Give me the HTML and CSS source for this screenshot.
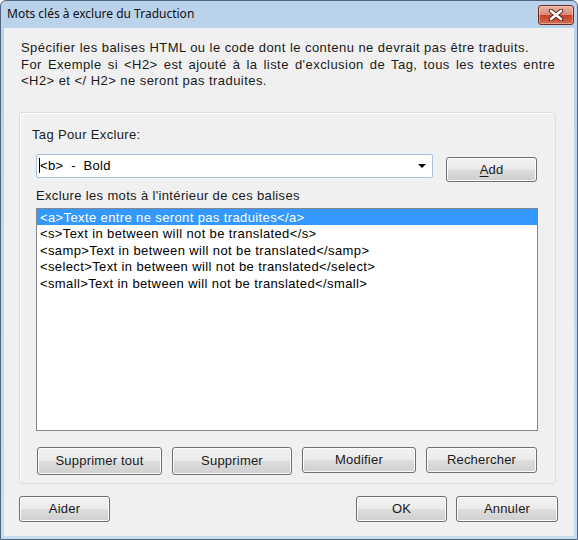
FILE: index.html
```html
<!DOCTYPE html>
<html lang="fr">
<head>
    <meta charset="UTF-8">
    <title>Mots clés à exclure du Traduction</title>
    <link rel="stylesheet" href="styles.css">
</head>
<body>

<div class="window">
    <div class="titlebar">
        <span class="title">Mots clés à exclure du Traduction</span>
        <span class="close">
            <svg width="16" height="12" viewBox="0 0 16 12">
                <path d="M3 2 L13 10 M13 2 L3 10" stroke="#5a2218" stroke-width="4.5" stroke-linecap="round"/>
                <path d="M3 2 L13 10 M13 2 L3 10" stroke="#fff" stroke-width="2.6" stroke-linecap="round"/>
            </svg>
        </span>
    </div>

    <div class="client">
        <p class="intro">Spécifier les balises HTML ou le code dont le contenu ne devrait pas être traduits.<br>
<span class="wide">For Exemple si &lt;H2&gt; est ajouté à la liste d'exclusion de Tag, tous les textes entre</span><br>
&lt;H2&gt; et &lt;/ H2&gt; ne seront pas traduites.</p>

        <div class="group">
            <div class="label tag-label">Tag Pour Exclure:</div>
            <div class="tag-row">
                <div class="combo">
                    <span class="combo-text">&lt;b&gt;  -  Bold</span>
                    <span class="arrow"></span>
                </div>
                <button class="btn btn-add"><u>A</u>dd</button>
            </div>

            <div class="label list-label">Exclure les mots à l'intérieur de ces balises</div>
            <ul class="listbox">
                <li class="selected">&lt;a&gt;Texte entre ne seront pas traduites&lt;/a&gt;</li>
                <li>&lt;s&gt;Text in between will not be translated&lt;/s&gt;</li>
                <li>&lt;samp&gt;Text in between will not be translated&lt;/samp&gt;</li>
                <li>&lt;select&gt;Text in between will not be translated&lt;/select&gt;</li>
                <li>&lt;small&gt;Text in between will not be translated&lt;/small&gt;</li>
            </ul>

            <div class="list-actions">
                <button class="btn btn-clear">Supprimer tout</button>
                <button class="btn btn-delete">Supprimer</button>
                <button class="btn btn-edit">Modifier</button>
                <button class="btn btn-find">Rechercher</button>
            </div>
        </div>

        <div class="footer">
            <button class="btn btn-help">Aider</button>
            <div class="footer-right">
                <button class="btn btn-ok">OK</button>
                <button class="btn btn-cancel">Annuler</button>
            </div>
        </div>
    </div>
</div>

</body>
</html>
```

FILE: styles.css
```css
html, body {
    margin: 0;
    padding: 0;
}
body {
    width: 578px;
    height: 540px;
    font-family: "Liberation Sans", Arial, sans-serif;
    font-size: 13px;
    color: #000;
}
.window {
    box-sizing: border-box;
    width: 578px;
    height: 540px;
    border: 1px solid #4f6580;
    border-radius: 6px 6px 0 0;
    background: linear-gradient(#bad2ea, #c6dcf1);
    display: flex;
    flex-direction: column;
}
.titlebar {
    height: 27px;
    display: flex;
    align-items: center;
    justify-content: space-between;
    padding-left: 6px;
    flex-shrink: 0;
}
.title {
    font-family: "Noto Sans", sans-serif;
    font-size: 12px;
    color: #111;
    margin-top: -2px;
}
.close {
    box-sizing: border-box;
    width: 36px;
    height: 20px;
    margin-right: 3px;
    align-self: flex-start;
    margin-top: 4px;
    border: 1px solid #6b2a22;
    border-radius: 3px;
    background: linear-gradient(#eab0a3 0%, #dc8a78 48%, #c3402a 52%, #d66a52 100%);
    box-shadow: inset 0 0 0 1px rgba(255, 220, 210, 0.5);
    display: flex;
    align-items: center;
    justify-content: center;
}
.client {
    flex: 1;
    margin: 0 3px 3px 3px;
    background: #f0f0f0;
    padding: 12px 18px 0 15px;
}
.intro {
    margin: 0 0 0 2px;
    line-height: 16.5px;
    letter-spacing: 0.45px;
    color: #1a1a1a;
    white-space: nowrap;
}
.intro .wide {
    word-spacing: 2px;
}
.group {
    margin-top: 22px;
    height: 372px;
    box-sizing: border-box;
    border: 1px solid #d5dfe5;
    border-radius: 3px;
    box-shadow: inset 1px 1px 0 #fff;
    padding: 14px 18px 0 16px;
}
.label {
    line-height: 16px;
    letter-spacing: 0.35px;
    color: #1a1a1a;
}
.tag-label {
    margin-left: -4px;
}
.tag-row {
    display: flex;
    align-items: flex-start;
    margin-top: 11px;
    height: 28px;
}
.combo {
    box-sizing: border-box;
    width: 397px;
    height: 24px;
    background: #fff;
    border: 1px solid #a9c1dc;
    border-radius: 2px;
    display: flex;
    align-items: center;
    justify-content: space-between;
    padding: 0 6px 0 2px;
}
.combo-text {
    white-space: pre;
    border-left: 1px solid #000;
    line-height: 15px;
    letter-spacing: 0.3px;
}
.arrow {
    width: 0;
    height: 0;
    border-left: 4px solid transparent;
    border-right: 4px solid transparent;
    border-top: 4px solid #000;
}
.btn {
    box-sizing: border-box;
    font-family: "Liberation Sans", Arial, sans-serif;
    font-size: 13px;
    font-weight: 400;
    letter-spacing: 0.2px;
    color: #1a1a1a;
    border: 1px solid #707070;
    border-radius: 3px;
    background: linear-gradient(#f2f2f2 0%, #ebebeb 48%, #dddddd 52%, #cfcfcf 100%);
    box-shadow: inset 0 0 0 1px #fbfbfb;
    padding: 0;
    height: 26px;
}
.btn u {
    text-decoration-thickness: 1px;
    text-underline-offset: 2px;
}
.btn-add {
    width: 91px;
    height: 25px;
    margin-left: 13px;
    margin-top: 3px;
}
.list-label {
    margin-top: 6px;
}
.listbox {
    list-style: none;
    margin: 4px 0 0 0;
    padding: 0;
    box-sizing: border-box;
    width: 502px;
    height: 223px;
    background: #fff;
    border: 1px solid #828790;
}
.listbox li {
    padding: 2px 0 0 3px;
    line-height: 14.6px;
    letter-spacing: 0.38px;
    white-space: nowrap;
}
.listbox li.selected {
    background: #3399ff;
    color: #fff;
}
.list-actions {
    display: flex;
    align-items: flex-start;
    gap: 10px;
    margin-top: 16px;
    margin-left: 1px;
}
.btn-clear {
    width: 125px;
    height: 28px;
}
.btn-delete {
    width: 120px;
    height: 28px;
}
.btn-edit {
    width: 114px;
}
.btn-find {
    width: 111px;
}
.footer {
    display: flex;
    justify-content: space-between;
    margin-top: 12px;
    margin-right: -2px;
}
.footer-right {
    display: flex;
    gap: 9px;
}
.btn-help,
.btn-ok {
    width: 91px;
}
.btn-cancel {
    width: 102px;
}
```
